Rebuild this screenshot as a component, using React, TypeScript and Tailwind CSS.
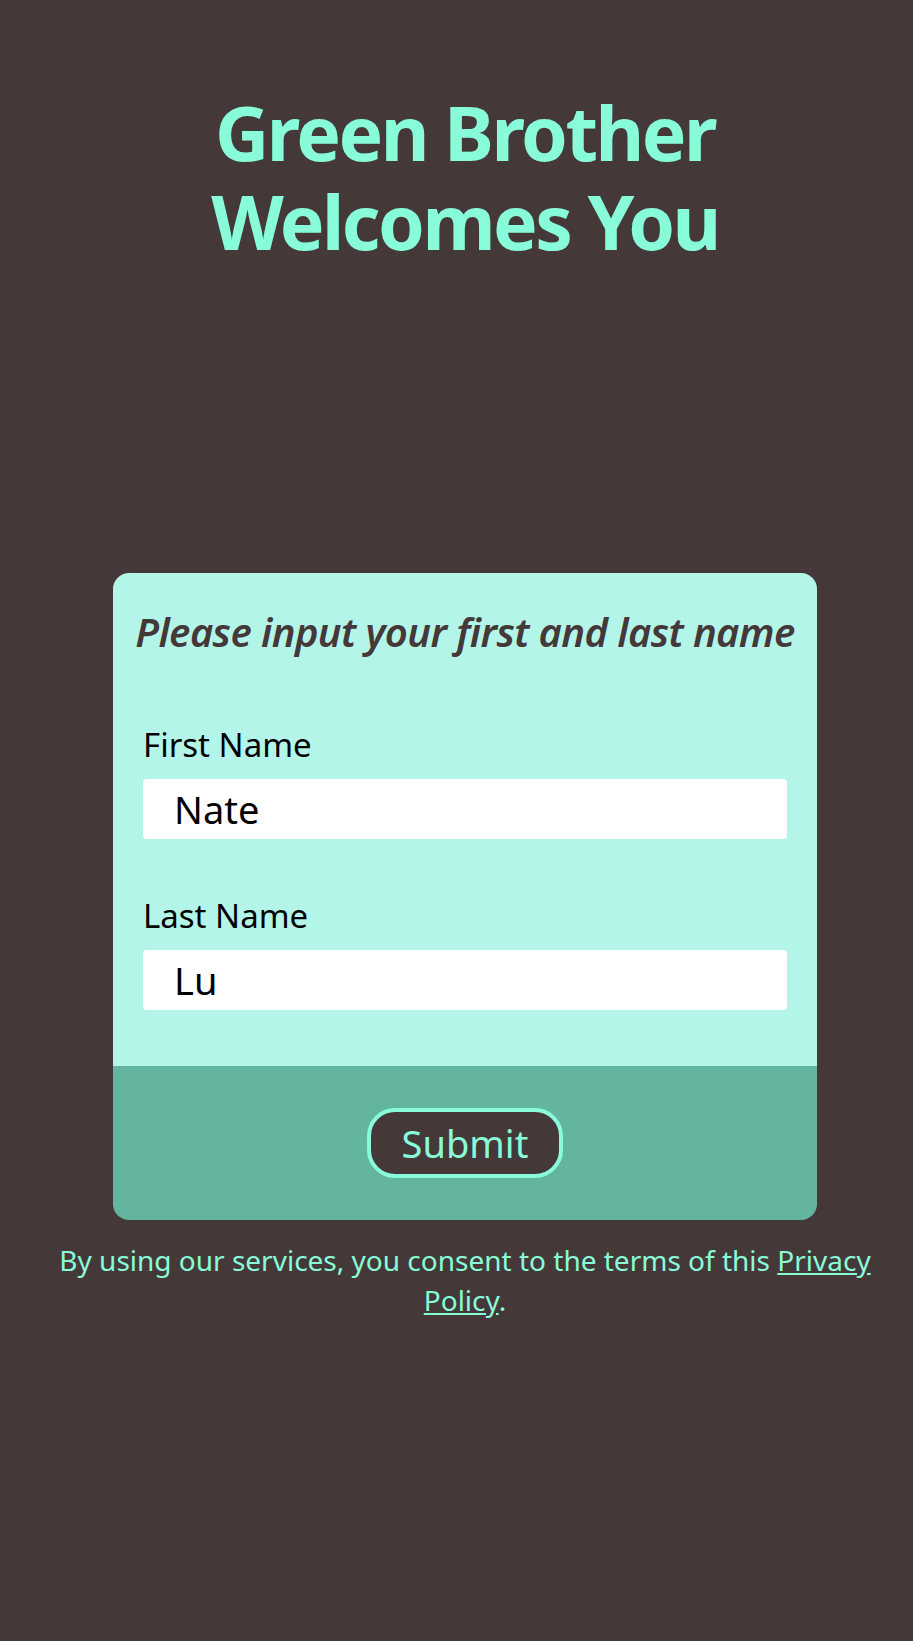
import React from 'react';

const font = { fontFamily: '"Noto Sans", "Open Sans", sans-serif' };

export default function App() {
  return (
    <div style={font} className="min-h-screen bg-[#443839] pl-[17px] flex flex-col items-center">
      <h1 className="pt-[88px] text-center text-[75px] leading-[89px] font-bold text-[#88fcd8] tracking-[-2.5px]">
        Green Brother
        <br />
        Welcomes You
      </h1>

      <form className="mt-[307px] w-[704px] rounded-2xl overflow-hidden" onSubmit={(e) => e.preventDefault()}>
        <div className="bg-[#b4f5e9] px-[30px] pt-[35px] pb-[56px]">
          <h2 className="-mx-[30px] text-center italic font-semibold text-[40px] leading-[48px] text-[#443839] whitespace-nowrap tracking-[-0.6px]">
            Please input your first and last name
          </h2>

          <label className="block mt-[69px] text-[33px] leading-[40px] text-black">First Name</label>
          <input
            defaultValue="Nate"
            className="mt-[14px] block w-full h-[60px] rounded bg-white pl-[31px] text-[38px] text-black outline-none"
          />

          <label className="block mt-[57px] text-[33px] leading-[40px] text-black">Last Name</label>
          <input
            defaultValue="Lu"
            className="mt-[14px] block w-full h-[60px] rounded bg-white pl-[31px] text-[38px] text-black outline-none"
          />
        </div>
        <div className="bg-[#64b5a0] h-[154px] flex items-center justify-center">
          <button
            type="submit"
            className="w-[196px] h-[70px] rounded-[28px] border-4 border-[#88fcd8] bg-[#443839] text-[38px] leading-none text-[#88fcd8]"
          >
            Submit
          </button>
        </div>
      </form>

      <p className="mt-[20px] w-[830px] text-center text-[28px] leading-[40px] text-[#88fcd8]">
        By using our services, you consent to the terms of this{' '}
        <a href="#" className="underline">Privacy Policy</a>.
      </p>
    </div>
  );
}
